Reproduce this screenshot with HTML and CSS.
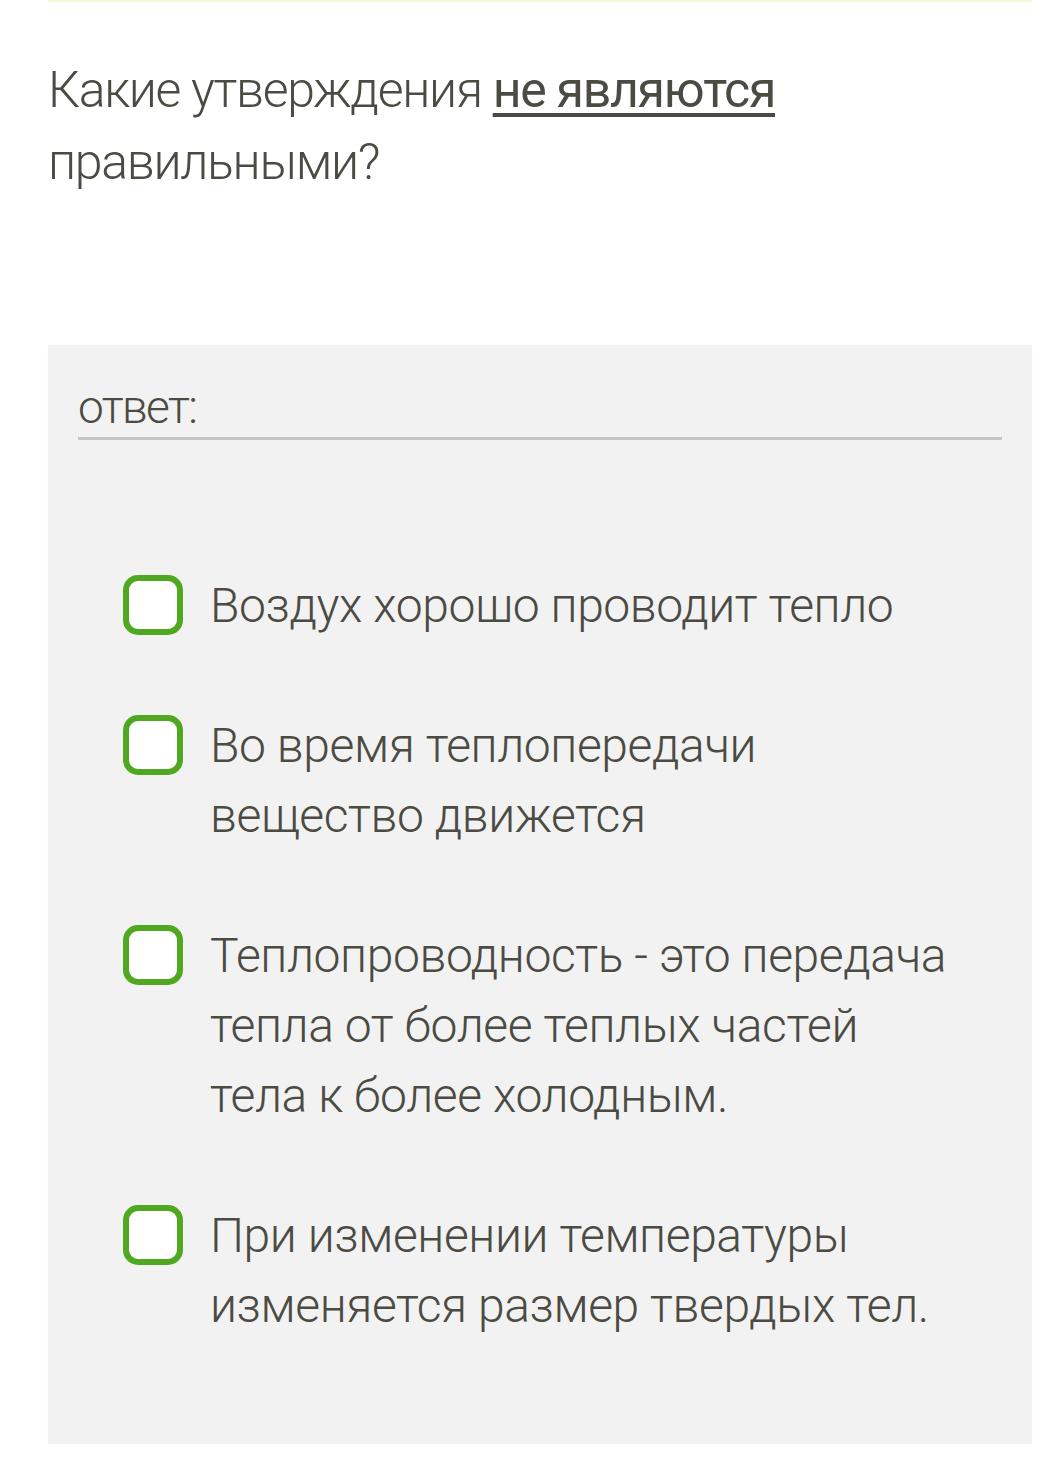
FILE: index.html
```html
<!DOCTYPE html>
<html lang="ru">
<head>
<meta charset="utf-8">
<link rel="stylesheet" href="styles.css">
</head>
<body>
<div class="page">
  <div class="topbar"></div>
  <p class="question">Какие утверждения <u class="emph">не являются</u><br>правильными?</p>
  <div class="panel">
    <div class="answer-label">ответ:</div>
    <ul class="options">
      <li class="option"><span class="box"></span><span class="text">Воздух хорошо проводит тепло</span></li>
      <li class="option"><span class="box"></span><span class="text">Во время теплопередачи<br>вещество движется</span></li>
      <li class="option"><span class="box"></span><span class="text">Теплопроводность - это передача<br>тепла от более теплых частей<br>тела к более холодным.</span></li>
      <li class="option"><span class="box"></span><span class="text">При изменении температуры<br>изменяется размер твердых тел.</span></li>
    </ul>
  </div>
</div>
</body>
</html>
```

FILE: styles.css
```css
html, body {
  margin: 0;
  padding: 0;
  background: #ffffff;
}
body {
  font-family: Roboto, "Noto Sans", sans-serif;
  font-weight: 300;
  color: #4b4b43;
}
.page {
  width: 984px;
  margin-left: 48px;
}
.topbar {
  height: 2px;
  background: #f3f6d8;
  box-shadow: 0 3px 10px rgba(243, 246, 210, 0.7);
}
.question {
  margin: 52px 0 0 0;
  font-size: 50px;
  line-height: 72px;
  letter-spacing: -1.3px;
}
.emph {
  font-weight: 400;
  text-decoration-thickness: 4px;
  text-underline-offset: 6px;
}
.panel {
  margin-top: 147px;
  background: #f2f2f2;
  padding: 32px 30px 103px 30px;
  box-shadow: 0 2px 2px rgba(0, 0, 0, 0.03);
}
.answer-label {
  font-size: 46px;
  line-height: 60px;
  letter-spacing: -1.6px;
  border-bottom: 3px solid #c4c4c4;
}
.options {
  list-style: none;
  margin: 131px 0 0 0;
  padding: 0 0 0 45px;
  display: flex;
  flex-direction: column;
  gap: 70px;
}
.option {
  display: flex;
  align-items: flex-start;
  gap: 27px;
}
.box {
  flex: none;
  box-sizing: border-box;
  width: 60px;
  height: 60px;
  margin-top: 4px;
  border: 6px solid #50a821;
  border-radius: 15px;
  background: #ffffff;
}
.text {
  font-size: 48px;
  line-height: 70px;
  letter-spacing: -0.4px;
}
```
